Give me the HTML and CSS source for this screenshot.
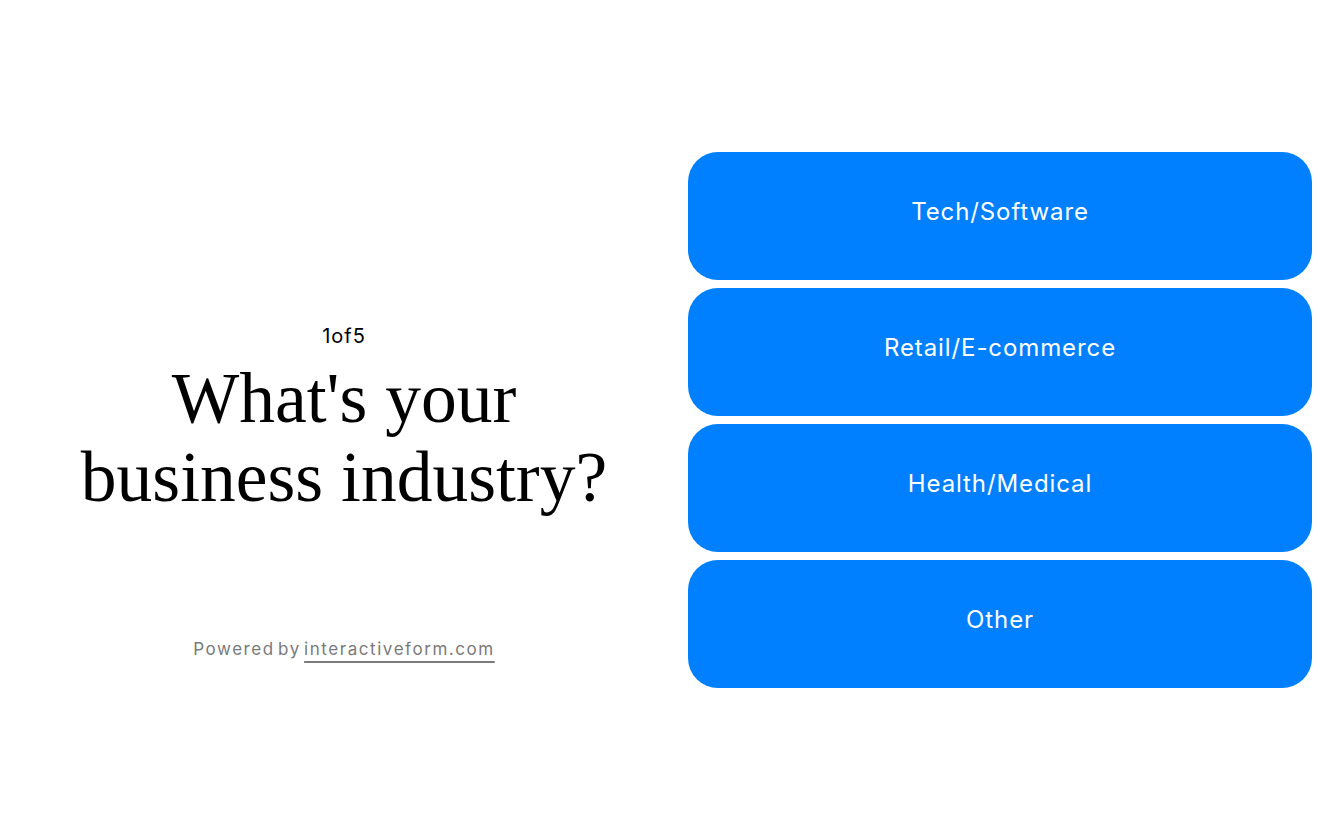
FILE: index.html
```html
<!DOCTYPE html>
<html lang="en">
<head>
<meta charset="utf-8">
<title>What's your business industry?</title>
<link rel="stylesheet" href="styles.css">
</head>
<body>
<main class="page">
  <section class="intro">
    <div class="spacer"></div>
    <div class="question">
      <p class="progress">1of5</p>
      <h1 class="title">What's your business industry?</h1>
    </div>
    <div class="footer">
      <p class="powered">Powered by <a class="brand" href="#">interactiveform.com</a></p>
    </div>
  </section>
  <section class="options">
    <button class="option" type="button">Tech/Software</button>
    <button class="option" type="button">Retail/E-commerce</button>
    <button class="option" type="button">Health/Medical</button>
    <button class="option" type="button">Other</button>
  </section>
</main>
</body>
</html>
```
FILE: styles.css
```css
* { box-sizing: border-box; }
html, body { margin: 0; padding: 0; background: #ffffff; }
body { font-family: Inter, "Noto Sans", sans-serif; color: #000; }

.page {
  display: flex;
  align-items: center;
  height: 840px;
  width: 1344px;
  padding-right: 32px;
}

.intro {
  width: 688px;
  height: 536px;
  display: grid;
  grid-template-rows: 1fr auto 1fr;
  text-align: center;
}

.question { padding: 0 60px; }

.progress {
  margin: 0;
  font-size: 20px;
  line-height: 24px;
  letter-spacing: 1px;
}

.title {
  margin: 10px 0 0;
  font-family: "Liberation Serif", "Times New Roman", serif;
  font-weight: 400;
  font-size: 71.5px;
  line-height: 79px;
}

.footer {
  display: flex;
  align-items: flex-end;
  justify-content: center;
  padding-bottom: 27px;
}

.powered {
  margin: 0;
  font-size: 17px;
  line-height: 24px;
  color: #7a7a7a;
  letter-spacing: 1.55px;
  word-spacing: -3px;
}

.brand {
  color: #7a7a7a;
  text-decoration: underline;
  text-decoration-thickness: 2px;
  text-underline-offset: 6px;
}

.options {
  width: 624px;
  display: flex;
  flex-direction: column;
  gap: 8px;
}

.option {
  height: 128px;
  border: 0;
  border-radius: 30px;
  padding: 0 0 9px;
  background: #0080ff;
  color: #ffffff;
  font-family: Inter, "Noto Sans", sans-serif;
  font-size: 24px;
  font-weight: 400;
  letter-spacing: 0.9px;
  cursor: pointer;
}
```
